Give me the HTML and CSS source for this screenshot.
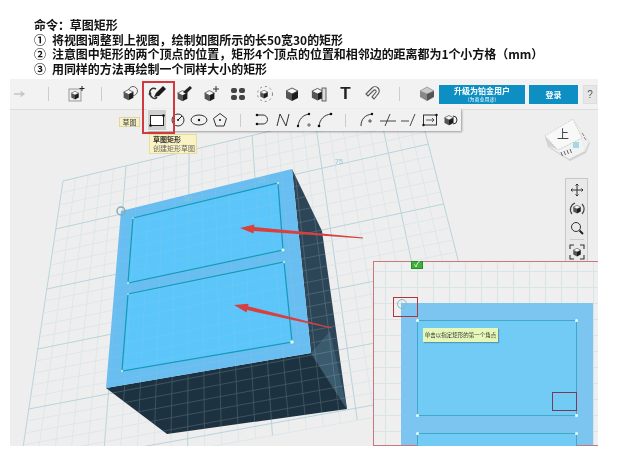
FILE: index.html
```html
<!DOCTYPE html>
<html lang="zh-CN">
<head>
  <meta charset="UTF-8">
  <title>草图矩形</title>
  <link rel="stylesheet" href="styles.css">
</head>
<body>

<svg class="defs" width="0" height="0">
  <symbol id="cube" viewBox="0 0 16 16">
    <polygon points="8,2 14,5 8,8 2,5" fill="#f6f6f6" stroke="#333" stroke-width="0.8"/>
    <polygon points="2,5 8,8 8,15 2,12" fill="#555"/>
    <polygon points="8,8 14,5 14,12 8,15" fill="#1c1c1c"/>
  </symbol>
</svg>

<div class="steps">
  <div>命令：草图矩形</div>
  <div><span class="num">①</span>将视图调整到上视图，绘制如图所示的长50宽30的矩形</div>
  <div><span class="num">②</span>注意图中矩形的两个顶点的位置，矩形4个顶点的位置和相邻边的距离都为1个小方格（mm）</div>
  <div><span class="num">③</span>用同样的方法再绘制一个同样大小的矩形</div>
</div>

<div class="app">
  <div class="toolbar">
    <div class="tool arrow">
      <svg width="12" height="8" viewBox="0 0 12 8"><path d="M0 4H9M6.500 1.500L10 4 6.500 6.500" fill="none" stroke="#c4c4c4" stroke-width="1.300"/></svg>
    </div>
    <div class="sep first"></div>
    <div class="tool new-obj">
      <svg width="18" height="18" viewBox="0 0 18 18"><rect x="1" y="4" width="12" height="12" fill="#eee" stroke="#999"/><use href="#cube" x="2" y="5" width="10" height="10"/><path d="M14 1v5M11.500 3.500h5" stroke="#222"/></svg>
    </div>
    <div class="sep"></div>
    <div class="tool group-start"><svg width="18" height="18" viewBox="0 0 18 18"><circle cx="12" cy="6" r="4.500" fill="none" stroke="#666"/><use href="#cube" x="1" y="3" width="13" height="13"/></svg></div>
    <div class="tool"><svg width="20" height="18" viewBox="0 0 20 18"><path d="M9 4C5 2 2 5 3 9s5 6 7 3" fill="none" stroke="#333" stroke-width="1.500"/><circle cx="3" cy="9" r="1.400" fill="#333"/><path d="M7 12l2-4 7-7 3 3-7 7z" fill="#1a1a1a"/></svg></div>
    <div class="tool"><svg width="18" height="18" viewBox="0 0 18 18"><use href="#cube" x="1" y="4" width="13" height="13"/><path d="M8 7l7-6 2 2-6 6z" fill="#222"/></svg></div>
    <div class="tool"><svg width="18" height="18" viewBox="0 0 18 18"><use href="#cube" x="1" y="4" width="13" height="13"/><path d="M14 1v6M11 4h6" stroke="#333"/></svg></div>
    <div class="tool"><svg width="16" height="16" viewBox="0 0 16 16"><g fill="#444"><rect x="1" y="2" width="6" height="5" rx="2"/><rect x="9" y="2" width="6" height="5" rx="2"/><rect x="1" y="9" width="6" height="5" rx="2"/><rect x="9" y="9" width="6" height="5" rx="2"/></g></svg></div>
    <div class="tool"><svg width="18" height="18" viewBox="0 0 18 18"><circle cx="9" cy="9" r="7.500" fill="none" stroke="#888" stroke-dasharray="2 3"/><use href="#cube" x="3" y="4" width="10" height="10"/></svg></div>
    <div class="tool"><svg width="18" height="18" viewBox="0 0 18 18"><use href="#cube" x="1" y="1" width="16" height="16"/></svg></div>
    <div class="tool"><svg width="18" height="18" viewBox="0 0 18 18"><use href="#cube" x="0" y="1" width="15" height="16"/><rect x="12" y="3" width="4" height="13" fill="#ddd" stroke="#444" stroke-width="0.8"/></svg></div>
    <div class="tool"><span class="t-glyph">T</span></div>
    <div class="tool"><svg width="18" height="18" viewBox="0 0 18 18"><path d="M2 9l6-6a4 4 0 0 1 6 6l-4 5-2-2 4-5a1.500 1.500 0 0 0-2-2L4 11z" fill="none" stroke="#555" stroke-width="1.100"/></svg></div>
    <div class="sep last"></div>
    <div class="tool layers"><svg width="18" height="18" viewBox="0 0 18 18"><polygon points="9,2 16,6 9,9 2,6" fill="#ccc" stroke="#777" stroke-width="0.6"/><polygon points="2,6 9,9 9,16 2,12" fill="#888"/><polygon points="16,6 9,9 9,16 16,12" fill="#555"/></svg></div>
    <div class="upgrade">
      <span>升级为铂金用户</span>
      <small>(为商业用途)</small>
    </div>
    <div class="login">登录</div>
    <div class="help">?</div>
  </div>

  <div class="viewport">
    <svg class="scene" viewBox="10 109 588 336" width="588" height="336">
      <defs>
        <clipPath id="topClip"><polygon points="121,210 292,168 311,352 106,387"/></clipPath>
        <clipPath id="sideClip"><polygon points="292,168 322,230 347,408 167,433 106,387 311,352"/></clipPath>
        <g id="grid"></g>
      </defs>
      <use href="#grid"/>
      <text class="ruler" x="335" y="163">75</text>

      <polygon points="292,168 322,230 347,408 311,352" fill="#2c4658"/>
      <polygon points="311,352 347,408 330,330" fill="#3a5a6e"/>
      <polygon points="106,387 311,352 347,408 167,433" fill="#1d3240"/>
      <polygon points="121,210 292,168 311,352 106,387" fill="#68bdf1"/>
      <polygon points="133,217 278,182 283,249 128,282" fill="#5cc5f9"/>
      <polygon points="128,293 284,261 292,341 122,370" fill="#5cc5f9"/>
      <g clip-path="url(#topClip)" opacity="0.12"><use href="#grid"/></g>
      <g clip-path="url(#sideClip)" opacity="0.22"><use href="#grid"/></g>

      <g fill="none" stroke="#129ab8" stroke-width="1.200">
        <polygon points="133,217 278,182 283,249 128,282"/>
        <polygon points="128,293 284,261 292,341 122,370"/>
      </g>
      <g fill="#e8fbff" stroke="#5bb" stroke-width="0.5">
        <circle cx="133" cy="217" r="1"/><circle cx="278" cy="182" r="1.200"/><circle cx="283" cy="249" r="1.800"/><circle cx="128" cy="282" r="1.200"/>
        <circle cx="128" cy="293" r="1"/><circle cx="284" cy="261" r="1.200"/><circle cx="292" cy="341" r="2"/><circle cx="122" cy="370" r="1.200"/>
      </g>
      <circle cx="121" cy="210" r="4" fill="none" stroke="#8aa9b5" stroke-width="1.500"/>
      <text class="ruler" x="184" y="200">50</text>
      <text class="ruler" x="258" y="181">25</text>

      <polygon points="240,227 254.400,223.600 254.200,226.100 363,236.600 363,237.400 253.800,230.100 253.600,232.600" fill="#d8403f"/>
      <polygon points="234,304 248.600,302.800 248.100,305.300 332,326.600 332,327.400 247.100,309.100 246.600,311.600" fill="#d8403f"/>

      <g class="view-cube">
        <polygon points="545,136 573,118 590,142 586,152 570,160 548,146" fill="#d2d2d2"/>
        <polygon points="545,135 573,118 582,137 558,149" fill="#f8f8f8"/>
        <polygon points="573,118 589,141 585,150 582,137" fill="#efefef"/>
        <polygon points="558,149 582,137 585,150 569,158 547,144" fill="#f2f2f2"/>
        <path d="M545 135L573 118L582 137L558 149z" fill="none" stroke="#bbb" stroke-dasharray="1.500 1.500" stroke-width="0.7"/>
        <text class="cube-label" x="557" y="138">上</text>
        <rect x="573" y="141" width="6" height="6" fill="#a6d8e2"/>
        <path d="M561 151l1.500 4M564 150l1.500 4M567 149l1.500 4M570 148l1.500 4" stroke="#555" stroke-width="0.9"/>
        <path d="M582 132l2 3M584 136l2 3" stroke="#777" stroke-width="0.9"/>
      </g>
    </svg>

    <div class="nav-panel">
      <svg width="14" height="14" viewBox="0 0 14 14"><path d="M7 1v12M1 7h12M5.500 2.500L7 1l1.500 1.500M5.500 11.500L7 13l1.500-1.500M2.500 5.500L1 7l1.500 1.500M11.500 5.500L13 7l-1.500 1.500" fill="none" stroke="#333"/></svg>
      <svg width="16" height="16" viewBox="0 0 16 16"><use href="#cube" x="3" y="3" width="10" height="10"/><path d="M3 13A7 7 0 0 1 6 2M13 3a7 7 0 0 1 0 10" fill="none" stroke="#444" stroke-width="1.200"/></svg>
      <svg width="14" height="14" viewBox="0 0 14 14"><circle cx="6" cy="6" r="4.500" fill="none" stroke="#333"/><path d="M9.500 9.500L13 13" stroke="#222" stroke-width="2"/></svg>
      <div class="nav-sep"></div>
      <svg width="16" height="16" viewBox="0 0 16 16"><use href="#cube" x="3" y="3" width="10" height="10"/><path d="M1 5V1h4M11 1h4v4M15 11v4h-4M5 15H1v-4" fill="none" stroke="#333" stroke-width="1.100"/></svg>
    </div>

    <div class="inset">
      <div class="confirm">✓</div>
      <div class="plate">
        <div class="sketch-rect"><i class="dot tl"></i><i class="dot tr"></i><i class="dot bl"></i><i class="dot br"></i></div>
        <div class="sketch-rect second"><i class="dot tl"></i><i class="dot tr"></i></div>
      </div>
      <div class="pick-ring"></div>
      <div class="mark mark-corner"></div>
      <div class="mark mark-cell"></div>
      <div class="hint">单击以指定矩形的第一个角点</div>
    </div>
  </div>

  <div class="subbar">
    <span class="sub-label">草图</span>
    <div class="sub-active"><svg width="16" height="13" viewBox="0 0 16 13"><rect x="1.500" y="1.500" width="13" height="10" fill="#fff" stroke="#222"/><circle cx="1.500" cy="11.500" r="1.300" fill="#111"/><circle cx="14.500" cy="1.500" r="1.300" fill="#111"/></svg></div>
    <div class="sub-tool"><svg width="16" height="16" viewBox="0 0 16 16"><circle cx="8" cy="8" r="6" fill="none" stroke="#333"/><path d="M8 8l4-4" stroke="#111"/><circle cx="8" cy="8" r="1" fill="#111"/></svg></div>
    <div class="sub-tool"><svg width="18" height="12" viewBox="0 0 18 12"><ellipse cx="9" cy="6" rx="8" ry="5" fill="none" stroke="#333"/><circle cx="9" cy="6" r="1.200" fill="#111"/></svg></div>
    <div class="sub-tool"><svg width="16" height="16" viewBox="0 0 16 16"><polygon points="8,1.500 14.500,6.500 12,14 4,14 1.500,6.500" fill="none" stroke="#333"/><circle cx="8" cy="8" r="1" fill="#111"/></svg></div>
    <div class="sub-sep"></div>
    <div class="sub-tool"><svg width="16" height="16" viewBox="0 0 16 16"><path d="M3 3h6a4 4 0 0 1 0 9H3" fill="none" stroke="#333"/><circle cx="3" cy="3" r="1.300" fill="#111"/><circle cx="3" cy="12" r="1.300" fill="#111"/></svg></div>
    <div class="sub-tool"><svg width="16" height="16" viewBox="0 0 16 16"><path d="M2 14L5 2l6 12 3-12" fill="none" stroke="#333"/></svg></div>
    <div class="sub-tool"><svg width="16" height="16" viewBox="0 0 16 16"><path d="M2 14C3 7 7 3 13 2" fill="none" stroke="#333"/><circle cx="2" cy="14" r="1.200" fill="#111"/><circle cx="13" cy="2" r="1.200" fill="#111"/><path d="M11 13h4M13 11v4" stroke="#333" stroke-width="0.7"/></svg></div>
    <div class="sub-tool"><svg width="16" height="16" viewBox="0 0 16 16"><path d="M2 14C3 7 7 3 14 2" fill="none" stroke="#333"/><circle cx="2" cy="14" r="1.300" fill="#111"/><circle cx="14" cy="2" r="1.300" fill="#111"/></svg></div>
    <div class="sub-sep"></div>
    <div class="sub-tool"><svg width="16" height="16" viewBox="0 0 16 16"><path d="M2 14C2 7 6 3 13 2" fill="none" stroke="#333"/><circle cx="13" cy="2" r="1.200" fill="#111"/><path d="M9 9h4M11 7v4" stroke="#333" stroke-width="0.8"/></svg></div>
    <div class="sub-tool"><svg width="18" height="16" viewBox="0 0 18 16"><path d="M1 9h16M11 2L6 14" fill="none" stroke="#333" stroke-width="0.9"/></svg></div>
    <div class="sub-tool"><svg width="18" height="16" viewBox="0 0 18 16"><path d="M1 9h8M15 2L10 14" fill="none" stroke="#333" stroke-width="0.9"/></svg></div>
    <div class="sub-tool"><svg width="16" height="14" viewBox="0 0 16 14"><rect x="1.500" y="2" width="13" height="10" fill="none" stroke="#333"/><path d="M4 7h8M10 5l2 2-2 2" fill="none" stroke="#333" stroke-width="0.8"/><circle cx="14.500" cy="2" r="1.200" fill="#111"/><circle cx="1.500" cy="12" r="1.200" fill="#111"/></svg></div>
    <div class="sub-tool"><svg width="16" height="16" viewBox="0 0 16 16"><use href="#cube" x="0" y="1" width="12" height="14"/><path d="M10 4a4 4 0 0 1 0 8" fill="none" stroke="#333"/></svg></div>
  </div>

  <div class="tip">
    <b>草图矩形</b>
    <span>创建矩形草图</span>
  </div>
  <div class="highlight"></div>
</div>

<script src="grid.js"></script>
</body>
</html>
```

FILE: styles.css
```css
body {
  margin: 0;
  background: #fff;
  font-family: "Liberation Sans", "Noto Sans CJK SC", sans-serif;
  color: #111;
}
.defs {
  position: absolute;
}

.steps {
  padding: 18px 0 0 34px;
  height: 61px;
  font-family: "Noto Sans CJK SC", sans-serif;
  font-size: 12px;
  font-weight: 700;
  line-height: 14.700px;
  letter-spacing: -0.05px;
  white-space: nowrap;
  filter: blur(0.3px);
}
.num {
  margin-right: 6px;
}

.app {
  position: relative;
  width: 588px;
  margin-left: 10px;
  filter: blur(0.35px);
}

.toolbar {
  display: flex;
  align-items: center;
  height: 30px;
  background: #f2f2f2;
  border-bottom: 1px solid #ddd;
}
.tool {
  display: flex;
  align-items: center;
  justify-content: center;
  width: 27px;
  flex: none;
}
.tool.arrow { width: 20px; }
.tool.new-obj { margin-left: 14px; }
.tool.group-start { margin-left: 14px; }
.tool.layers { width: 25px; margin-left: 14px; }
.sep {
  width: 1px;
  height: 14px;
  background: #ccc;
  margin-left: 11px;
  flex: none;
}
.sep.first { margin-left: 18px; }
.sep.last { margin-left: 13px; }
.t-glyph {
  font-size: 17px;
  font-weight: 700;
  color: #222;
}
.upgrade, .login {
  display: flex;
  flex-direction: column;
  align-items: center;
  justify-content: center;
  height: 19px;
  background: #0e8fc3;
  color: #fff;
  font-family: "Noto Sans CJK SC", sans-serif;
}
.upgrade {
  width: 86px;
  font-size: 8px;
  font-weight: 700;
  line-height: 10px;
}
.upgrade small {
  font-size: 5px;
  font-weight: 400;
  line-height: 6px;
}
.login {
  width: 49px;
  margin-left: 4px;
  font-size: 8px;
  font-weight: 700;
}
.help {
  width: 14px;
  height: 19px;
  margin-left: 5px;
  background: #e6e6e6;
  border: 1px solid #ddd;
  box-sizing: border-box;
  text-align: center;
  font-size: 10px;
  line-height: 17px;
  color: #555;
}

.viewport {
  position: relative;
  height: 336px;
  overflow: hidden;
  background: #eeeeef;
}
.scene {
  display: block;
}
.grid-minor {
  stroke: #d9e5e8;
  stroke-width: 0.8;
}
.grid-major {
  stroke: #b8d4da;
  stroke-width: 1;
}
.ruler {
  font-size: 7px;
  fill: #8fc5da;
}
.cube-label {
  font-family: "Noto Sans CJK SC", sans-serif;
  font-size: 12px;
  fill: #444;
}

.nav-panel {
  position: absolute;
  left: 555px;
  top: 68px;
  display: flex;
  flex-direction: column;
  align-items: center;
  gap: 4px;
  width: 23px;
  height: 90px;
  padding-top: 4px;
  background: #e9e9e9;
  border: 1px solid #c8c8c8;
  box-sizing: border-box;
}
.nav-sep {
  width: 14px;
  height: 1px;
  background: #ccc;
}

.inset {
  position: absolute;
  left: 363px;
  top: 151px;
  width: 226px;
  height: 185px;
  box-sizing: border-box;
  border: 1px solid #c8777c;
  background-color: #efefef;
  background-image:
    linear-gradient(#d8e4e6 1px, transparent 1px),
    linear-gradient(90deg, #d8e4e6 1px, transparent 1px);
  background-size: 16px 16px;
  background-position: 11px 9px;
}
.confirm {
  position: absolute;
  left: 37px;
  top: -1px;
  width: 12px;
  height: 8px;
  background: #3fae3f;
  border: 1px solid #2c8a2c;
  box-sizing: border-box;
  color: #fff;
  font-size: 8px;
  line-height: 6px;
  text-align: center;
}
.plate {
  position: absolute;
  left: 27px;
  top: 41px;
  width: 192px;
  bottom: 0;
  background: #7cc5f0;
}
.sketch-rect {
  position: relative;
  margin: 17px 0 0 16px;
  width: 160px;
  height: 96px;
  background: #72cbf4;
  border: 1px solid #3fa9c9;
  box-sizing: border-box;
}
.sketch-rect.second {
  height: 40px;
}
.dot {
  position: absolute;
  width: 3px;
  height: 3px;
  background: #eefcff;
  border-radius: 50%;
}
.dot.tl { left: -2px; top: -2px; }
.dot.tr { right: -2px; top: -2px; }
.dot.bl { left: -2px; bottom: -2px; }
.dot.br { right: -2px; bottom: -2px; }
.pick-ring {
  position: absolute;
  left: 23px;
  top: 37px;
  width: 8px;
  height: 8px;
  border: 1px solid #8fb6c4;
  border-radius: 50%;
}
.mark {
  position: absolute;
  border: 1px solid #b3343c;
  box-sizing: border-box;
}
.mark-corner {
  left: 19px;
  top: 35px;
  width: 25px;
  height: 20px;
}
.mark-cell {
  left: 178px;
  top: 130px;
  width: 25px;
  height: 19px;
  border-color: #7a3a5a;
}
.hint {
  position: absolute;
  left: 49px;
  top: 66px;
  width: 75px;
  height: 14px;
  background: #e6f8b9;
  box-shadow: 1px 1px 1px rgba(0, 0, 0, 0.25);
  font-family: "Noto Sans CJK SC", sans-serif;
  font-size: 5.500px;
  line-height: 14px;
  text-align: center;
  color: #333;
  white-space: nowrap;
}

.subbar {
  position: absolute;
  left: 137px;
  top: 30px;
  display: flex;
  align-items: center;
  width: 314px;
  height: 22px;
  background: #f1f1f1;
  box-shadow: 1px 1px 2px rgba(0, 0, 0, 0.35);
}
.sub-label {
  position: absolute;
  left: -28px;
  top: 8px;
  width: 21px;
  height: 10px;
  background: #f7f1c6;
  border: 1px solid #ddd6a0;
  box-sizing: border-box;
  font-family: "Noto Sans CJK SC", sans-serif;
  font-size: 7px;
  line-height: 8px;
  text-align: center;
  color: #444;
}
.sub-active {
  display: flex;
  align-items: center;
  justify-content: center;
  width: 23px;
  height: 20px;
  margin: 0 1px 0 1px;
  background: #cfcfcf;
}
.sub-tool {
  display: flex;
  align-items: center;
  justify-content: center;
  width: 21px;
  flex: none;
}
.sub-sep {
  width: 1px;
  height: 13px;
  margin: 0 10px;
  background: #ccc;
  flex: none;
}

.tip {
  position: absolute;
  left: 139px;
  top: 55px;
  display: flex;
  flex-direction: column;
  justify-content: center;
  width: 48px;
  height: 20px;
  padding-left: 3px;
  box-sizing: border-box;
  background: #fbf3c3;
  border: 1px solid #e6dca0;
  font-family: "Noto Sans CJK SC", sans-serif;
  font-size: 7px;
  line-height: 9px;
  color: #333;
}
.tip span {
  color: #666;
}
.highlight {
  position: absolute;
  left: 132px;
  top: 2px;
  width: 33px;
  height: 53px;
  box-sizing: border-box;
  border: 2px solid #cf3a40;
}
```

FILE: grid.js
```js
// perspective-ish floor grid, corners read off the screenshot
const TL = [63, 180], TR = [416, 95], BL = [18, 480], BR = [493, 395];
const COLS = 28, ROWS = 25;
const grid = document.getElementById('grid');

function mix(a, b, t) {
  return [a[0] + (b[0] - a[0]) * t, a[1] + (b[1] - a[1]) * t];
}

function addLine(p, q, major) {
  const line = document.createElementNS('http://www.w3.org/2000/svg', 'line');
  line.setAttribute('x1', p[0]);
  line.setAttribute('y1', p[1]);
  line.setAttribute('x2', q[0]);
  line.setAttribute('y2', q[1]);
  line.setAttribute('class', major ? 'grid-major' : 'grid-minor');
  grid.appendChild(line);
}

for (let i = 0; i <= COLS; i++) {
  addLine(mix(TL, TR, i / COLS), mix(BL, BR, i / COLS), i % 5 === 0 || i === COLS);
}
for (let j = 0; j <= ROWS; j++) {
  addLine(mix(TL, BL, j / ROWS), mix(TR, BR, j / ROWS), j === 0 || j % 5 === 4);
}
```
